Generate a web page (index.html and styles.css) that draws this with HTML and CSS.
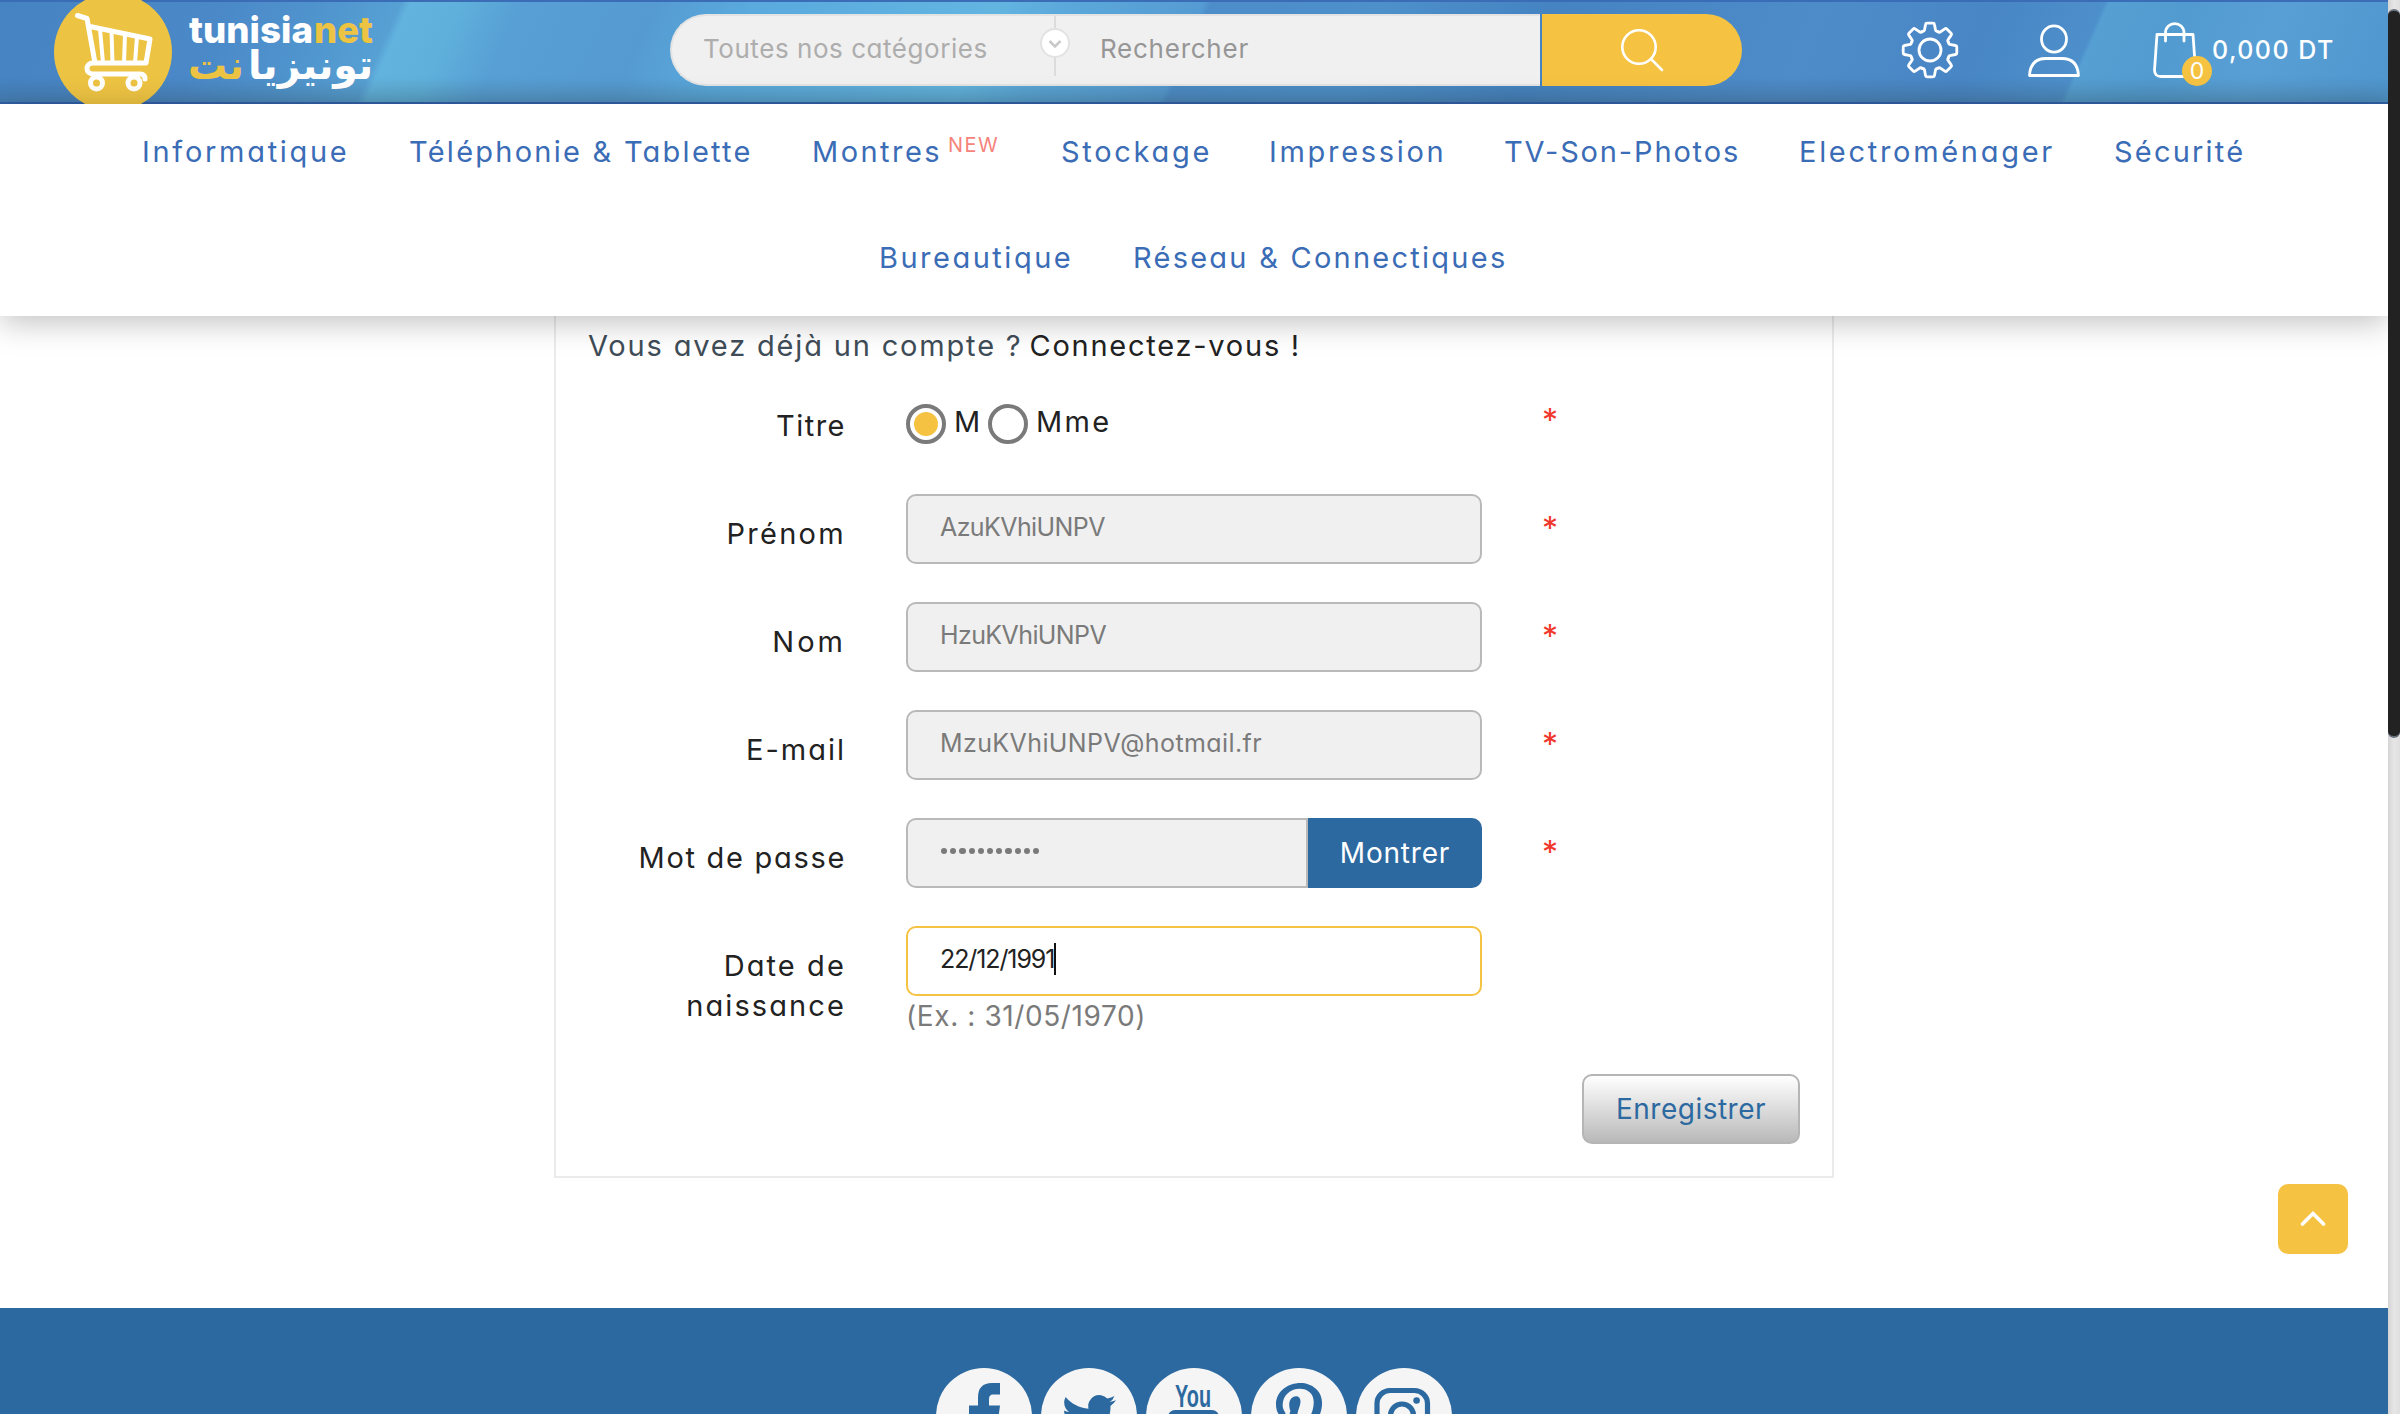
FILE: index.html
```html
<!DOCTYPE html>
<html lang="fr">
<head>
<meta charset="utf-8">
<title>Tunisianet - Créez votre compte</title>
<link rel="stylesheet" href="styles.css">
</head>
<body>
<div class="page">
  <header class="topbar">
    <a class="logo">
      <svg width="400" height="104" viewBox="0 0 400 104">
        <circle cx="113" cy="52" r="59" fill="#edc343"/>
        <g fill="none" stroke="#fff" stroke-width="5" stroke-linecap="round" stroke-linejoin="round">
          <path d="M77.500 15.500L87 18.500L95 63M90 26.500L150 39L146 63H93C85 63 85 74 93 74H140Q145 74 145 79"/>
          <path stroke-width="4" d="M100 29L103 63M111.500 31.500L112.500 63M125 34L124 63M137 37L135 63"/>
          <circle cx="96.500" cy="83" r="6"/><circle cx="134" cy="83" r="6"/>
        </g>
        <g class="wordmark">
          <text x="189" y="42.500" textLength="124" lengthAdjust="spacingAndGlyphs" fill="#fff">tunisia</text>
          <text x="314" y="42.500" textLength="59" lengthAdjust="spacingAndGlyphs" fill="#edc343">net</text>
        </g>
        <g class="wordmark-ar">
          <text x="248" y="79" textLength="125" lengthAdjust="spacingAndGlyphs" fill="#fff">تونيزيا</text>
          <text x="188" y="79" textLength="56" lengthAdjust="spacingAndGlyphs" fill="#edc343">نت</text>
        </g>
      </svg>
    </a>
    <form class="search">
      <div class="search-box">
        <span class="category">Toutes nos catégories</span>
        <span class="divider"><svg width="32" height="60" viewBox="0 0 32 60"><path d="M16 0V60" stroke="#dcdcdc" stroke-width="2"/><circle cx="16" cy="27" r="14" fill="#fff" stroke="#e2e2e2" stroke-width="2"/><path d="M10.500 25L16 30.500L21.500 25" fill="none" stroke="#c9c9c9" stroke-width="2.500"/></svg></span>
        <span class="query">Rechercher</span>
      </div>
      <button type="button" class="search-btn" aria-label="Rechercher"><svg width="44" height="44" viewBox="0 0 44 44" fill="none" stroke="#fff" stroke-width="2.600" stroke-linecap="round"><circle cx="19" cy="19" r="16.700"/><path d="M31 31L42 42"/></svg></button>
    </form>
    <div class="tools">
      <svg width="60" height="60" viewBox="-30 -30 60 60" fill="none" stroke="#fff" stroke-width="2.800" stroke-linejoin="round" stroke-linecap="round">
        <defs><path id="tooth" d="M7.650 -18.500Q5.500 -18.500 5.300 -21L4.500 -25.500Q4.300 -26.800 3 -26.800H-3Q-4.300 -26.800 -4.500 -25.500L-5.300 -21Q-5.500 -18.500 -7.650 -18.500"/></defs>
        <use href="#tooth"/><use href="#tooth" transform="rotate(45)"/><use href="#tooth" transform="rotate(90)"/><use href="#tooth" transform="rotate(135)"/><use href="#tooth" transform="rotate(180)"/><use href="#tooth" transform="rotate(225)"/><use href="#tooth" transform="rotate(270)"/><use href="#tooth" transform="rotate(315)"/>
        <circle r="11"/>
      </svg>
      <svg class="user" width="56" height="60" viewBox="0 0 56 60" fill="none" stroke="#fff" stroke-width="2.800" stroke-linejoin="round"><ellipse cx="28" cy="19" rx="12.500" ry="13.200"/><path d="M3.500 55.500Q4.500 38.500 20 38.500H36Q51.500 38.500 52.500 55.500Z"/></svg>
      <div class="bag">
        <svg width="46" height="60" viewBox="0 0 46 60" fill="none" stroke="#fff" stroke-width="2.800" stroke-linecap="round" stroke-linejoin="round"><path d="M5 14.500H41L43.500 50Q43.500 56.500 38 56.500H9Q2.500 56.500 2.500 50Z"/><path d="M13.500 21V13C13.500 0.500 32 0.500 32 13V21"/></svg>
        <span class="badge">0</span>
      </div>
      <span class="total">0,000 DT</span>
    </div>
  </header>
  <nav class="menu">
    <div class="menu-row first">
      <a>Informatique</a><a>Téléphonie &amp; Tablette</a><a>Montres<sup>NEW</sup></a><a>Stockage</a><a>Impression</a><a>TV-Son-Photos</a><a>Electroménager</a><a>Sécurité</a>
    </div>
    <div class="menu-row second">
      <a>Bureautique</a><a>Réseau &amp; Connectiques</a>
    </div>
  </nav>
  <main class="card">
    <p class="login">Vous avez déjà un compte ?<a>Connectez-vous !</a></p>
    <div class="row">
      <label class="l-titre">Titre</label>
      <div class="radios"><span class="radio on"></span><span class="m">M</span><span class="radio"></span><span class="mme">Mme</span></div>
      <span class="req">*</span>
    </div>
    <div class="row"><label class="l-prenom">Prénom</label><div class="field tight">AzuKVhiUNPV</div><span class="req">*</span></div>
    <div class="row"><label class="l-nom">Nom</label><div class="field tight">HzuKVhiUNPV</div><span class="req">*</span></div>
    <div class="row"><label class="l-email">E-mail</label><div class="field email">MzuKVhiUNPV@hotmail.fr</div><span class="req">*</span></div>
    <div class="row">
      <label class="l-mdp">Mot de passe</label>
      <div class="group"><div class="field dots"><i></i><i></i><i></i><i></i><i></i><i></i><i></i><i></i><i></i><i></i><i></i></div><button type="button" class="show">Montrer</button></div>
      <span class="req">*</span>
    </div>
    <div class="row">
      <label class="l-date">Date de<br>naissance</label>
      <div><div class="field focus">22/12/1991<span class="caret"></span></div><span class="hint">(Ex. : 31/05/1970)</span></div>
    </div>
    <div class="actions"><button type="button" class="save">Enregistrer</button></div>
  </main>
  <footer class="footer">
    <svg width="96" height="96" viewBox="0 0 96 96"><circle cx="48" cy="48" r="48" fill="#f5f5f5"/><path fill="#2c69a0" d="M64 15V26.500H57Q53 26.500 53 31V37.500H64L62.500 49H53V80H42V49H33V37.500H42V29.500Q42 15 56 15Z"/></svg>
    <svg width="96" height="96" viewBox="0 0 96 96"><circle cx="48" cy="48" r="48" fill="#f5f5f5"/><path fill="#2c69a0" transform="translate(21 22) scale(2.250)" d="M23.953 4.570a10 10 0 01-2.825.775 4.958 4.958 0 002.163-2.723c-.951.555-2.005.959-3.127 1.184a4.920 4.920 0 00-8.384 4.482C7.690 8.095 4.067 6.130 1.640 3.162a4.822 4.822 0 00-.666 2.475c0 1.710.870 3.213 2.188 4.096a4.904 4.904 0 01-2.228-.616v.060a4.923 4.923 0 003.946 4.827 4.996 4.996 0 01-2.212.085 4.936 4.936 0 004.604 3.417 9.867 9.867 0 01-6.102 2.105c-.390 0-.779-.023-1.170-.067a13.995 13.995 0 007.557 2.209c9.053 0 13.998-7.496 13.998-13.985 0-.210 0-.420-.015-.630A9.935 9.935 0 0024 4.590z"/></svg>
    <svg width="96" height="96" viewBox="0 0 96 96"><circle cx="48" cy="48" r="48" fill="#f5f5f5"/><text class="you" x="29" y="39" textLength="36" lengthAdjust="spacingAndGlyphs">You</text><rect x="22" y="42" width="51" height="36" rx="7" fill="#2c69a0"/></svg>
    <svg width="96" height="96" viewBox="0 0 96 96"><circle cx="48" cy="48" r="48" fill="#f5f5f5"/><path fill="#2c69a0" transform="translate(25 14.200) scale(.12)" d="M204 6.500C101.400 6.500 0 74.900 0 185.600 0 256 39.600 296 63.600 296c9.900 0 15.600-27.600 15.600-35.400 0-9.300-23.700-29.100-23.700-67.800 0-80.400 61.200-137.400 140.400-137.400 68.100 0 118.500 38.700 118.500 109.800 0 53.100-21.300 152.700-90.300 152.700-24.900 0-46.200-18-46.200-43.800 0-37.800 26.400-74.400 26.400-113.400 0-66.200-93.900-54.200-93.900 25.800 0 16.800 2.100 35.400 9.600 50.700-13.800 59.400-42 147.900-42 209.100 0 18.900 2.700 37.500 4.500 56.400 3.400 3.800 1.700 3.400 6.900 1.500 50.400-69 48.600-82.500 71.400-172.800 12.300 23.400 44.100 36 69.300 36 106.200 0 153.900-103.500 153.900-196.800C384 71.300 298.200 6.500 204 6.500z"/></svg>
    <svg width="96" height="96" viewBox="0 0 96 96"><circle cx="48" cy="48" r="48" fill="#f5f5f5"/><rect x="21" y="22.500" width="50.500" height="50.500" rx="13" fill="none" stroke="#2c69a0" stroke-width="5.200"/><circle cx="46" cy="47.500" r="11.500" fill="none" stroke="#2c69a0" stroke-width="5.200"/><circle cx="60.600" cy="32.500" r="3.300" fill="#2c69a0"/></svg>
  </footer>
  <a class="to-top"><svg width="26" height="18" viewBox="0 0 26 18" fill="none" stroke="#fff" stroke-width="3.600" stroke-linecap="round"><path d="M2.500 14L13 3.500L23.500 14"/></svg></a>
</div>
<div class="scrollbar"><div class="thumb"></div></div>
</body>
</html>
```
FILE: styles.css
```css
* { box-sizing: border-box; }
body {
  margin: 0;
  display: flex;
  height: 1414px;
  overflow: hidden;
  background: #fff;
  color: #222;
  font: 29px/40px Inter, "Liberation Sans", sans-serif;
  font-feature-settings: "cv11";
}
button { font: inherit; border: 0; padding: 0; }
svg { display: block; flex: none; }
.page { width: 2388px; height: 1414px; overflow: hidden; }

/* top bar */
.topbar {
  display: flex;
  align-items: center;
  height: 104px;
  background:
    linear-gradient(#3b6cb6 0 2px, transparent 2px 102px, #315fa5 102px),
    linear-gradient(transparent 78px, rgba(60, 90, 100, .22) 102px),
    linear-gradient(114deg, #4583c2 0, #4a88c8 9%, #4f93cd 13%, #56a0d4 16.500%, #62b3de 16.900%, #5fb0db 19%, #579fd5 21.500%, #559bd2 27%, #5aaade 31%, #62b5e1 41%, #5ba8da 44%, #559bd3 49.500%, #4d8dca 49.800%, #4d90ca 57%, #4583c2 64%, #4d8bc9 75%, #4886c5 82%, #4d8fcb 86.500%, #559fd3 86.700%, #529bd0 90%, #589fd5 94%, #4f96cf 100%);
}
.logo { width: 670px; }
.wordmark { font: 800 37px Inter, sans-serif; }
.wordmark-ar { font: 700 40px "DejaVu Sans", sans-serif; }
.search { display: flex; align-items: flex-start; gap: 2px; height: 72px; margin-bottom: 4px; }
.search-box {
  display: flex;
  width: 870px;
  height: 72px;
  padding-left: 31px;
  border: 2px solid #e3e3e3;
  border-right: 0;
  border-radius: 36px 0 0 36px;
  background: #f0f0f0;
  font-size: 26px;
  line-height: 66px;
}
.category { width: 336px; color: #adadad; letter-spacing: .550px; }
.query { margin-left: 29px; color: #969696; letter-spacing: .75px; }
.search-btn { display: flex; align-items: center; justify-content: center; width: 200px; height: 72px; border-radius: 0 36px 36px 0; background: #f5c242; }
.tools { display: flex; align-items: center; margin-left: 158px; padding-bottom: 4px; color: #fff; }
.user { margin-left: 66px; }
.bag { position: relative; margin-left: 70px; }
.badge { position: absolute; left: 30px; top: 36px; width: 30px; height: 30px; border-radius: 15px; background: #f5c242; font-size: 23px; line-height: 30px; text-align: center; }
.total { margin-left: 14px; font-size: 25px; font-weight: 500; letter-spacing: 1.450px; line-height: 60px; }

/* categories */
.menu { position: relative; height: 212px; background: #fff; color: #3b6cb6; box-shadow: 0 6px 30px rgba(0, 0, 0, .25); }
.menu-row { display: grid; height: 106px; line-height: 96px; white-space: nowrap; }
.first { grid-template-columns: 267px 403px 249px 208px 235px 295px 315px 140px; padding-left: 142px; }
.second { grid-template-columns: 254px 400px; padding-left: 879px; }
.first a { letter-spacing: 2.700px; }
.first a:nth-child(2) { letter-spacing: 2.250px; }
.first a:nth-child(3) { letter-spacing: 2.450px; }
.first a:nth-child(6) { letter-spacing: 1.850px; }
.first a:nth-child(8) { letter-spacing: 2.200px; }
.second a { letter-spacing: 2.500px; }
.second a + a { letter-spacing: 2.250px; }
.menu sup { margin-left: 6px; font-size: 20px; line-height: 0; vertical-align: 10px; letter-spacing: 1.400px; color: #f4847c; }

/* account form */
.card { width: 1280px; height: 862px; margin-left: 554px; padding: 0 32px; border: 2px solid #ebebeb; border-top: 0; }
.login { margin: 0 0 10px; line-height: 60px; letter-spacing: 1.830px; color: #3f4d58; white-space: nowrap; }
.login a { margin-left: 7px; color: #222; letter-spacing: 1.750px; }
.row { display: grid; grid-template-columns: 259px 576px 60px; column-gap: 60px; height: 108px; margin-left: -1px; }
.row label { padding-top: 20px; text-align: right; white-space: nowrap; }
.l-titre { letter-spacing: 1.500px; }
.l-prenom { letter-spacing: 2.300px; }
.l-nom { letter-spacing: 3px; }
.l-email { letter-spacing: 2px; }
.l-mdp { letter-spacing: 1.700px; }
.l-date { letter-spacing: 2.100px; }
.row > :nth-child(2) { margin-left: 0; }
.radios { display: flex; height: 76px; align-items: center; }
.radio { flex: none; width: 40px; height: 40px; border: 4px solid #7a7a7a; border-radius: 50%; }
.on { padding: 4px; background: #f5c242 content-box; }
.m { width: 34px; margin-left: 8px; padding-bottom: 4px; }
.mme { margin-left: 8px; padding-bottom: 4px; letter-spacing: 2.300px; }
.req { padding: 19px 0 0; color: #f0372b; font-size: 32px; line-height: 32px; }
.field { display: flex; align-items: center; height: 70px; padding: 0 0 4px 32px; border: 2px solid #b9b9b9; border-radius: 10px; background: #f0f0f0; color: #7a7a7a; font-size: 25px; }
.tight { letter-spacing: -.6px; }
.email { letter-spacing: .4px; }
.focus { border-color: #f5c242; background: #fff; color: #222; letter-spacing: -1.100px; }
.caret { flex: none; width: 2px; height: 32px; background: #111; }
.group { display: flex; }
.dots { width: 402px; padding-left: 33px; gap: 2.900px; border-radius: 10px 0 0 10px; }
.dots i { width: 6.300px; height: 6.300px; border-radius: 50%; background: #7a7a7a; }
.show { width: 174px; height: 70px; border-radius: 0 10px 10px 0; background: #2c69a0; color: #fff; font-size: 28px; letter-spacing: .8px; }
.hint { display: block; font-size: 28px; letter-spacing: .6px; color: #7a7a7a; }
.actions { display: flex; justify-content: flex-end; padding-top: 40px; }
.save { width: 218px; height: 70px; border: 2px solid #b5b5b5; border-radius: 10px; background: linear-gradient(#fff, #b9b9b9); color: #2c69a0; font-size: 28px; letter-spacing: .5px; }

/* footer */
.footer { display: flex; gap: 9px; height: 106px; margin-top: 130px; padding: 60px 0 0 936px; background: #2c69a0; overflow: hidden; }
.you { font: 700 32px "Liberation Sans", sans-serif; fill: #2c69a0; }
.to-top { position: fixed; left: 2278px; top: 1184px; display: flex; align-items: center; justify-content: center; width: 70px; height: 70px; border-radius: 10px; background: #f5c242; }

.scrollbar { width: 12px; height: 1414px; padding-top: 9px; background: linear-gradient(90deg, #d4d4d4, #e6e6e6 50%, #dedede); }
.thumb { height: 729px; border: 1px solid #66707f; border-width: 2px 0; border-radius: 6px; background: #222; }
```
